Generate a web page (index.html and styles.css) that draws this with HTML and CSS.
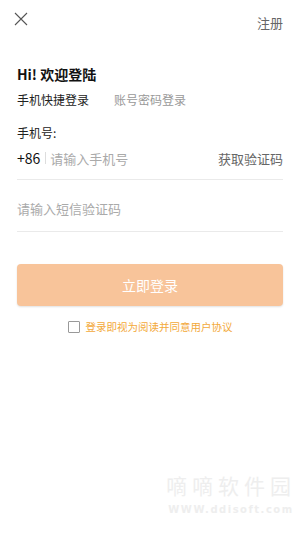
FILE: index.html
```html
<!DOCTYPE html>
<html lang="zh">
<head>
<meta charset="utf-8">
<link rel="stylesheet" href="styles.css">
</head>
<body>
<div class="page">
  <header class="topbar">
    <svg class="close" width="14" height="14" viewBox="0 0 14 14"><path d="M1 1L13 13M13 1L1 13" stroke="#555" stroke-width="1.1" fill="none"/></svg>
    <span class="register">注册</span>
  </header>
  <h1 class="title">Hi! 欢迎登陆</h1>
  <nav class="tabs">
    <span class="tab active">手机快捷登录</span>
    <span class="tab">账号密码登录</span>
  </nav>
  <div class="label">手机号:</div>
  <div class="field phone">
    <span class="prefix">+86</span>
    <span class="sep"></span>
    <span class="placeholder">请输入手机号</span>
    <span class="getcode">获取验证码</span>
  </div>
  <div class="field code">
    <span class="placeholder">请输入短信验证码</span>
  </div>
  <button class="login">立即登录</button>
  <div class="agree">
    <span class="box"></span>
    <span class="agree-text">登录即视为阅读并同意用户协议</span>
  </div>
  <div class="watermark">
    <div class="wm-cn">嘀嘀软件园</div>
    <div class="wm-en">WWW.ddisoft.com</div>
  </div>
</div>
</body>
</html>
```

FILE: styles.css
```css
html, body {
  margin: 0;
  padding: 0;
  background: #fff;
}
body {
  font-family: "Noto Sans CJK SC", "Noto Sans", sans-serif;
  color: #222;
}
.page {
  width: 300px;
  height: 533px;
  position: relative;
  padding: 0 17px;
  box-sizing: border-box;
  display: flex;
  flex-direction: column;
}
.topbar {
  display: flex;
  justify-content: space-between;
  align-items: flex-start;
  height: 50px;
  margin-left: -3px;
}
.close {
  margin-top: 12px;
}
.register {
  font-size: 13px;
  color: #666;
  margin-top: 14px;
  line-height: 18px;
}
.title {
  margin: 14px 0 0;
  font-size: 14px;
  font-weight: bold;
  line-height: 20px;
  color: #111;
}
.tabs {
  display: flex;
  gap: 25px;
  margin-top: 7px;
  font-size: 12px;
  line-height: 17px;
}
.tab { color: #999; }
.tab.active { color: #222; }
.label {
  margin-top: 16px;
  font-size: 12px;
  line-height: 17px;
  color: #222;
}
.field {
  display: flex;
  align-items: center;
  border-bottom: 1px solid #eaeaea;
  font-size: 13px;
  box-sizing: border-box;
}
.phone {
  height: 39px;
  padding-bottom: 4px;
}
.prefix {
  font-size: 14px;
  color: #111;
}
.sep {
  width: 1px;
  height: 12px;
  background: #ddd;
  margin: 0 4px 0 5px;
}
.placeholder {
  color: #aaa;
  flex: 1;
}
.getcode {
  color: #666;
}
.code {
  height: 52px;
  padding-top: 6px;
}
.login {
  margin-top: 32px;
  height: 42px;
  border: none;
  border-radius: 4px;
  background: #f8c49a;
  color: #fff;
  font-family: inherit;
  font-size: 14px;
  box-shadow: 0 1px 2px rgba(0,0,0,0.12);
  padding: 0;
}
.agree {
  display: flex;
  justify-content: center;
  align-items: center;
  gap: 6px;
  margin-top: 13px;
}
.box {
  width: 10px;
  height: 10px;
  border: 1px solid #999;
  border-radius: 1px;
}
.agree-text {
  font-size: 10.5px;
  color: #f3a93a;
  line-height: 16px;
}
.watermark {
  position: absolute;
  left: 166px;
  top: 471px;
  color: #eeeeee;
  text-align: center;
}
.wm-cn {
  font-size: 21px;
  letter-spacing: 5px;
  line-height: 28px;
}
.wm-en {
  font-family: "DejaVu Sans", sans-serif;
  font-size: 10px;
  letter-spacing: 1.5px;
  font-weight: bold;
  line-height: 14px;
  margin-top: 4px;
}
```
